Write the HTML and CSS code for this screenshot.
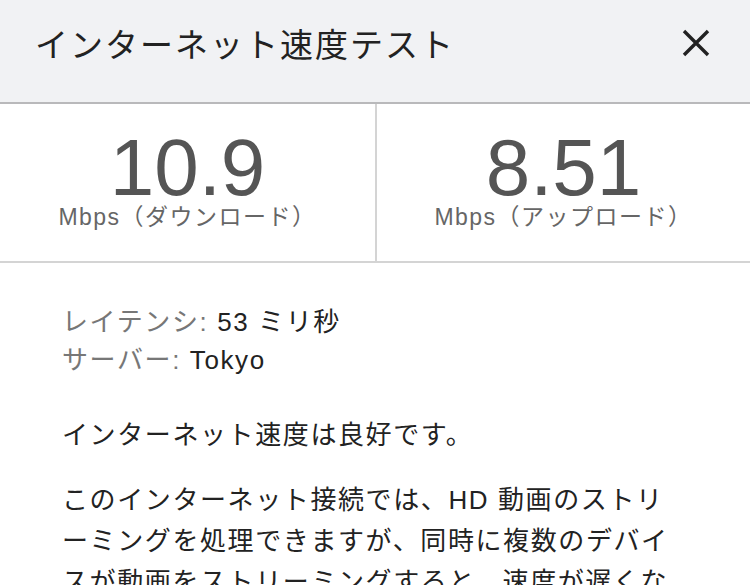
FILE: index.html
```html
<!DOCTYPE html>
<html lang="ja">
<head>
<meta charset="utf-8">
<title>インターネット速度テスト</title>
<link rel="stylesheet" href="styles.css">
</head>
<body>
<header class="header">
  <h1 class="title">インターネット速度テスト</h1>
  <button class="close" type="button" aria-label="閉じる">
    <svg viewBox="0 0 28 28" width="28" height="28"><path d="M2 2L26 26M26 2L2 26"/></svg>
  </button>
</header>
<section class="stats">
  <div class="stat">
    <div class="num">10.9</div>
    <div class="unit">Mbps（ダウンロード）</div>
  </div>
  <div class="stat">
    <div class="num">8.51</div>
    <div class="unit">Mbps（アップロード）</div>
  </div>
</section>
<section class="details">
  <p class="info"><span class="key">レイテンシ:</span> 53 ミリ秒<br><span class="key">サーバー:</span> Tokyo</p>
  <p class="summary">インターネット速度は良好です。</p>
  <p class="desc">このインターネット接続では、HD 動画のストリ<br>ーミングを処理できますが、同時に複数のデバイ<br>スが動画をストリーミングすると、速度が遅くな<br>ることがあります。</p>
</section>
</body>
</html>
```
FILE: styles.css
```css
html, body {
  margin: 0;
  padding: 0;
  background: #ffffff;
  overflow: hidden;
}
body {
  font-family: "Liberation Sans", "Noto Sans CJK JP", sans-serif;
  color: #222222;
}
.header {
  box-sizing: border-box;
  height: 104px;
  padding: 27px 40px 0 35px;
  background: #f1f2f4;
  border-bottom: 2px solid #b9b9bb;
  display: flex;
  justify-content: space-between;
  align-items: flex-start;
}
.title {
  margin: 0;
  font-family: "Noto Sans CJK JP", sans-serif;
  font-weight: 400;
  font-size: 33px;
  line-height: 33px;
  letter-spacing: 2px;
  color: #222222;
}
.close {
  margin: 2px 0 0;
  padding: 0;
  border: 0;
  background: none;
  width: 28px;
  height: 28px;
  display: block;
}
.close svg {
  display: block;
}
.close path {
  stroke: #222222;
  stroke-width: 3.4;
  fill: none;
}
.stats {
  display: grid;
  grid-template-columns: 1fr 1fr;
  height: 157px;
  border-bottom: 2px solid #d4d4d4;
}
.stat {
  padding-top: 28px;
  text-align: center;
}
.stat + .stat {
  border-left: 2px solid #d4d4d4;
}
.num {
  font-size: 80px;
  line-height: 72px;
  color: #555555;
}
.unit {
  margin-top: 2px;
  font-size: 23px;
  line-height: 22px;
  letter-spacing: 1.5px;
  color: #666666;
}
.details {
  padding: 40px 40px 0 62px;
  font-size: 26px;
  letter-spacing: 1.6px;
}
.details p {
  margin: 0;
}
.info {
  line-height: 38px;
}
.key {
  color: #777777;
}
.summary {
  margin-top: 37px !important;
  line-height: 38px;
}
.desc {
  margin-top: 26px !important;
  line-height: 41px;
}
```
